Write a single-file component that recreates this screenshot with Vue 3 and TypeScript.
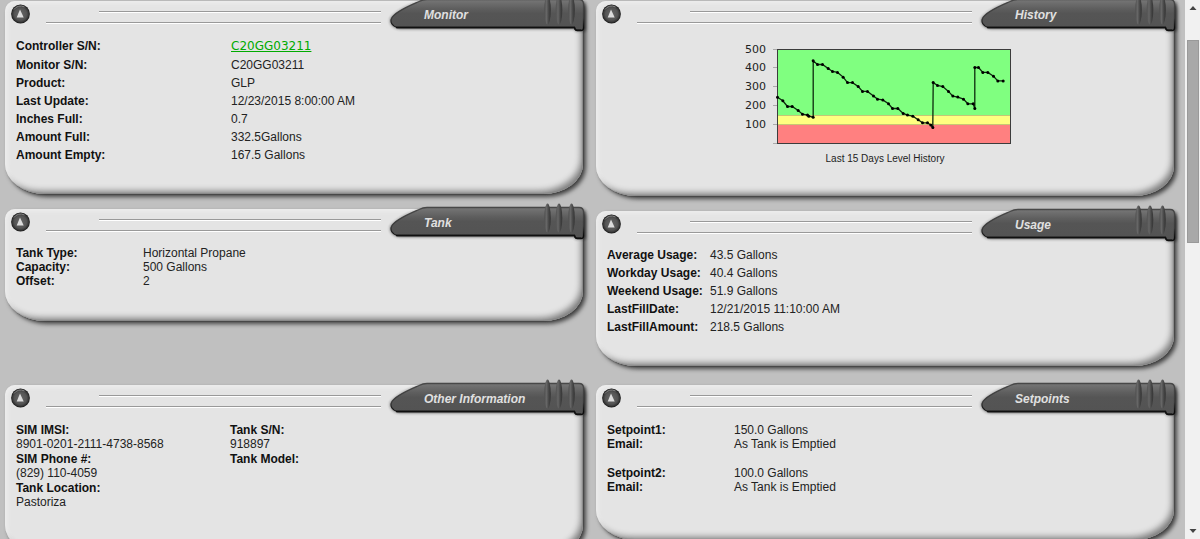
<script setup lang="ts">
interface Entry {
  label: string
  value: string
  link?: boolean
}

interface Panel {
  title: string
  kind: 'list' | 'stacked' | 'chart'
  look: string
  groups: Entry[][]
}

const monitor: Panel = {
  title: 'Monitor',
  kind: 'list',
  look: 'monitor',
  groups: [[
    { label: 'Controller S/N:', value: 'C20GG03211', link: true },
    { label: 'Monitor S/N:', value: 'C20GG03211' },
    { label: 'Product:', value: 'GLP' },
    { label: 'Last Update:', value: '12/23/2015 8:00:00 AM' },
    { label: 'Inches Full:', value: '0.7' },
    { label: 'Amount Full:', value: '332.5Gallons' },
    { label: 'Amount Empty:', value: '167.5 Gallons' },
  ]],
}

const tank: Panel = {
  title: 'Tank',
  kind: 'list',
  look: 'tank',
  groups: [[
    { label: 'Tank Type:', value: 'Horizontal Propane' },
    { label: 'Capacity:', value: '500 Gallons' },
    { label: 'Offset:', value: '2' },
  ]],
}

const history: Panel = { title: 'History', kind: 'chart', look: 'history', groups: [] }

const usage: Panel = {
  title: 'Usage',
  kind: 'list',
  look: 'usage',
  groups: [[
    { label: 'Average Usage:', value: '43.5 Gallons' },
    { label: 'Workday Usage:', value: '40.4 Gallons' },
    { label: 'Weekend Usage:', value: '51.9 Gallons' },
    { label: 'LastFillDate:', value: '12/21/2015 11:10:00 AM' },
    { label: 'LastFillAmount:', value: '218.5 Gallons' },
  ]],
}

const other: Panel = {
  title: 'Other Information',
  kind: 'stacked',
  look: 'other',
  groups: [
    [
      { label: 'SIM IMSI:', value: '8901-0201-2111-4738-8568' },
      { label: 'SIM Phone #:', value: '(829) 110-4059' },
      { label: 'Tank Location:', value: 'Pastoriza' },
    ],
    [
      { label: 'Tank S/N:', value: '918897' },
      { label: 'Tank Model:', value: '' },
    ],
  ],
}

const setpoints: Panel = {
  title: 'Setpoints',
  kind: 'list',
  look: 'setpoints',
  groups: [
    [
      { label: 'Setpoint1:', value: '150.0 Gallons' },
      { label: 'Email:', value: 'As Tank is Emptied' },
    ],
    [
      { label: 'Setpoint2:', value: '100.0 Gallons' },
      { label: 'Email:', value: 'As Tank is Emptied' },
    ],
  ],
}

const bands: Panel[][][] = [
  [[monitor, tank], [history, usage]],
  [[other], [setpoints]],
]

// Tank level readings: [time, gallons], three time units to one chart unit
const readings: [number, number][] = [
  [0, 246], [16, 227], [30, 197], [44, 197], [62, 176], [75, 156], [90, 151], [94, 145],
  [107, 140], [107, 440], [120, 420], [135, 420], [152, 399], [165, 383], [180, 378],
  [197, 353], [210, 324], [225, 324], [242, 303], [255, 277], [270, 277], [288, 252],
  [300, 236], [316, 232], [333, 211], [345, 186], [361, 186], [377, 160], [390, 151],
  [406, 145], [422, 126], [435, 110], [450, 110], [460, 98], [466, 85], [467, 324],
  [480, 309], [496, 303], [513, 277], [526, 252], [541, 247], [558, 236], [571, 211],
  [587, 211], [592, 186], [592, 404], [603, 404], [616, 378], [631, 378], [648, 358],
  [661, 333], [677, 333],
]

const plotLeft = 37.5
const levelY = (gallons: number): number => 103.5 - gallons * 0.188
const dots = readings.map(([t, g]) => ({ x: plotLeft + t / 3, y: levelY(g) }))
const line = dots.map((d) => `${d.x.toFixed(1)},${d.y.toFixed(1)}`).join(' ')
const ticks = [500, 400, 300, 200, 100, 0]
</script>

<template>
  <div class="page">
    <svg class="defs" aria-hidden="true">
      <defs>
        <linearGradient id="tabFill" x1="0" y1="0" x2="0" y2="1">
          <stop offset="0" stop-color="#777" />
          <stop offset="0.3" stop-color="#5e5e5e" />
          <stop offset="0.45" stop-color="#555" />
          <stop offset="1" stop-color="#535353" />
        </linearGradient>
        <linearGradient id="tabEdge" x1="0" y1="0" x2="0" y2="1">
          <stop offset="0" stop-color="#484848" />
          <stop offset="0.6" stop-color="#3a3a3a" />
          <stop offset="0.9" stop-color="#0c0c0c" />
        </linearGradient>
        <linearGradient id="ribFill" x1="0" y1="0" x2="1" y2="0">
          <stop offset="0" stop-color="#505050" />
          <stop offset="0.35" stop-color="#666" />
          <stop offset="0.7" stop-color="#464646" />
          <stop offset="1" stop-color="#343434" />
        </linearGradient>
        <radialGradient id="knobFill">
          <stop offset="0" stop-color="#666" />
          <stop offset="0.65" stop-color="#545454" />
          <stop offset="0.85" stop-color="#3a3a3a" />
          <stop offset="1" stop-color="#161616" />
        </radialGradient>
        <filter id="soft" x="-10%" y="-30%" width="120%" height="170%">
          <feGaussianBlur stdDeviation="1.8" />
        </filter>
      </defs>
    </svg>

    <main class="board">
      <div v-for="(band, b) in bands" :key="b" class="band">
        <div v-for="(column, c) in band" :key="c" class="column">
          <section v-for="panel in column" :key="panel.title" class="panel" :class="panel.look">
            <header class="head">
              <button class="knob" type="button" :aria-label="'Collapse ' + panel.title">
                <svg viewBox="0 0 20 20" width="20" height="20">
                  <circle cx="10.500" cy="10" r="9.4" fill="url(#knobFill)" />
                  <path d="M4 5.5 A8 8 0 0 1 14.500 3" fill="none" stroke="#858585" stroke-width="1" />
                  <path d="M10 5.5 L13.700 13.5 H6.7 Z" fill="#dcdcdc" />
                </svg>
              </button>
              <div class="rules">
                <div class="rule short"></div>
                <div class="rule"></div>
              </div>
              <div class="tab">
                <svg class="tab-shape" viewBox="0 0 206 44" width="206" height="44" aria-hidden="true">
                  <path d="M14 36 C5 35 1 27 7 23 C14 16 26 11 38 8 H196 Q200 9 200 13 V38 H189 V36 Z" fill="#222" opacity="0.7" filter="url(#soft)" />
                  <path d="M11 34.5 C6 33 4 29 5.5 25.5 C8 19 24 12.5 33 8.5 Q37 6.5 41 6.5 H193 Q197.500 6.5 197.500 11 V35 Q197.500 37.500 195 37.500 H191 Q189 37.500 188.500 34.500 Z" fill="url(#tabFill)" stroke="url(#tabEdge)" stroke-width="1.3" />
                  <path d="M10 34.500 H188.500 Q189 37.300 191 37.300 H195" fill="none" stroke="#101010" stroke-width="1.4" />
                  <ellipse cx="161.500" cy="17" rx="3.300" ry="14.500" fill="url(#ribFill)" />
                  <ellipse cx="173" cy="17" rx="3.300" ry="14.500" fill="url(#ribFill)" />
                  <ellipse cx="185.500" cy="17" rx="3.300" ry="14.500" fill="url(#ribFill)" />
                </svg>
                <h2 class="title">{{ panel.title }}</h2>
              </div>
            </header>

            <div v-if="panel.kind === 'chart'" class="body chart">
              <svg viewBox="0 0 290 111" width="290" height="111" role="img" aria-label="Level history">
                <rect x="37" y="9" width="233" height="66" fill="#80ff80" />
                <rect x="37" y="75" width="233" height="10" fill="#ffff80" />
                <rect x="37" y="85" width="233" height="19" fill="#ff8080" />
                <path d="M37 75.500 H270 M37 84.500 H270" stroke="#b0b070" stroke-width="1" opacity="0.7" />
                <g v-for="tick in ticks" :key="tick">
                  <path :d="`M33 ${Math.round(levelY(tick)) - 0.5} h4`" stroke="#aaa" />
                  <text v-if="tick" class="tick" x="26" :y="Math.round(levelY(tick)) + 3" text-anchor="end">{{ tick }}</text>
                </g>
                <rect x="37.500" y="9.500" width="233" height="94" fill="none" stroke="#3c3c3c" />
                <polyline :points="line" fill="none" stroke="#0c2a0c" stroke-width="1.300" />
                <circle v-for="(d, i) in dots" :key="i" :cx="d.x" :cy="d.y" r="1.500" fill="#000" />
              </svg>
              <p class="caption">Last 15 Days Level History</p>
            </div>

            <div v-else class="body">
              <dl v-for="(group, g) in panel.groups" :key="g" :class="panel.kind">
                <div v-for="entry in group" :key="entry.label" class="entry">
                  <dt>{{ entry.label }}</dt>
                  <dd>
                    <a v-if="entry.link" href="#">{{ entry.value }}</a>
                    <template v-else>{{ entry.value }}</template>
                  </dd>
                </div>
              </dl>
            </div>
          </section>
        </div>
      </div>
    </main>

    <aside class="scrollbar">
      <button class="arrow" type="button" aria-label="Scroll up">
        <svg viewBox="0 0 8 4" width="8" height="4"><path d="M4 0 L7.500 4 H0.500 Z" fill="#444" /></svg>
      </button>
      <div class="track"><div class="thumb"></div></div>
      <button class="arrow" type="button" aria-label="Scroll down">
        <svg viewBox="0 0 8 4" width="8" height="4"><path d="M0.500 0 H7.500 L4 4 Z" fill="#444" /></svg>
      </button>
    </aside>
  </div>
</template>

<style>
body {
  margin: 0;
  background: #c0c0c0;
}
</style>

<style scoped>
.page {
  display: flex;
  height: 100vh;
  overflow: hidden;
  background: #c0c0c0;
  color: #222;
  font-family: "Liberation Sans", Arial, sans-serif;
  font-size: 12px;
}

.defs {
  position: absolute;
  width: 0;
  height: 0;
}

.board {
  flex: 1;
  min-width: 0;
  display: flex;
  flex-direction: column;
  gap: 19px;
  padding: 1px 11px 16px 5px;
  overflow: hidden;
}

.band {
  display: grid;
  grid-template-columns: 1fr 1fr;
  gap: 13px;
  align-items: start;
}

.column {
  display: flex;
  flex-direction: column;
  gap: 15px;
}

.panel {
  border-radius: 10px 6px 40px 40px / 10px 6px 30px 30px;
  background: #e4e4e4;
  box-shadow:
    inset 3px 3px 4px -1px #eee,
    inset -1px -1px 1px #888,
    inset -5px -6px 6px -3px #808080,
    1px 1px 1px #484848,
    3px 3px 4px #484848;
}

.head {
  display: flex;
  height: 29px;
}

.knob {
  width: 20px;
  height: 20px;
  margin: 3px 0 0 5px;
  padding: 0;
  border: 0;
  border-radius: 50%;
  background: none;
  cursor: pointer;
}

.knob svg {
  display: block;
}

.rules {
  flex: 1;
  display: flex;
  flex-direction: column;
  gap: 9px;
  padding: 10px 8px 0 16px;
}

.rule {
  height: 1px;
  border-bottom: 1px solid #fff;
  background: #999;
}

.rule.short {
  margin-left: 53px;
}

.tab {
  position: relative;
  width: 194px;
}

.tab-shape {
  position: absolute;
  top: -8px;
  left: -3px;
}

.title {
  position: relative;
  margin: 0;
  padding: 6px 0 0 35px;
  color: #e0e0e0;
  font-size: 12px;
  font-style: italic;
  line-height: 16px;
  white-space: nowrap;
}

.body {
  padding: 8px 11px 33px;
  line-height: 14px;
}

dl,
dd,
dt {
  margin: 0;
}

dt {
  color: #111;
  font-weight: bold;
}

.list .entry {
  display: grid;
  grid-template-columns: 127px 1fr;
}

.monitor .body {
  padding: 7px 11px 30px;
  line-height: 18px;
}

.monitor .entry {
  grid-template-columns: 215px 1fr;
}

.monitor .entry:first-child {
  padding-bottom: 1px;
}

.monitor a {
  color: #0a0;
  font-family: "DejaVu Sans", Verdana, sans-serif;
}

.usage .body {
  padding: 6px 11px 30px;
  line-height: 18px;
}

.usage .entry {
  grid-template-columns: 103px 1fr;
}

.other .body {
  display: grid;
  grid-template-columns: 214px 1fr;
  padding: 9px 11px 46px;
}

.stacked {
  display: flex;
  flex-direction: column;
  gap: 1px;
}

.setpoints .body {
  display: flex;
  flex-direction: column;
  gap: 15px;
  padding: 9px 11px 46px;
}

.chart {
  display: flex;
  flex-direction: column;
  align-items: center;
  gap: 1px;
  padding: 10px 11px 30px;
}

.chart svg {
  display: block;
}

.tick {
  fill: #222;
  font-family: "DejaVu Sans", Verdana, sans-serif;
  font-size: 11px;
}

.caption {
  margin: 0;
  font-size: 10px;
}

.scrollbar {
  display: flex;
  flex-direction: column;
  width: 15px;
  background: #f1f1f1;
}

.arrow {
  display: flex;
  align-items: center;
  justify-content: center;
  height: 16px;
  padding: 0;
  border: 0;
  background: none;
}

.track {
  flex: 1;
  padding: 24px 1px 0 2px;
}

.thumb {
  box-sizing: border-box;
  height: 42%;
  border: 1px solid #999;
  background: #a8a8a8;
}
</style>
